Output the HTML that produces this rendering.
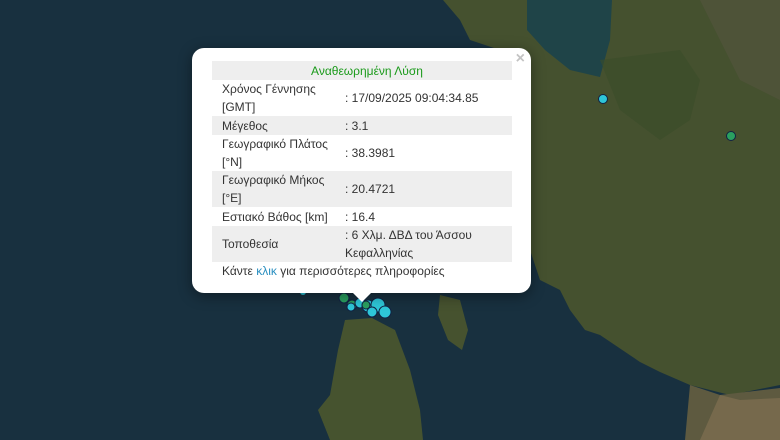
<!DOCTYPE html>
<html><head><meta charset="utf-8"><style>
body{margin:0;width:780px;height:440px;overflow:hidden;background:#16303f;font-family:"Liberation Sans","DejaVu Sans",sans-serif}
svg{position:absolute;left:0;top:0}
.pop{position:absolute;left:192px;top:48px;width:339px;height:245px;background:#fff;border-radius:12px;box-shadow:0 3px 14px rgba(0,0,0,.4)}
.tip{position:absolute;left:352px;top:292px;width:0;height:0;border-left:10px solid transparent;border-right:10px solid transparent;border-top:10px solid #fff}
.x{position:absolute;right:6px;top:2px;color:#c3c3c3;font-size:16px;font-weight:bold}
table{position:absolute;left:20px;top:13px;width:300px;border-collapse:collapse;font-size:12px;color:#333}
td{padding:0 0 0 10px;line-height:18px;vertical-align:middle}
tr.g td{background:#eee}
td.v{padding-left:4px}
.h td{text-align:center;color:#1a9a1a;height:19px}
</style></head><body>
<svg width="780" height="440" viewBox="0 0 780 440">
<rect width="780" height="440" fill="#18303f"/>
<path d="M443,0 L780,0 L780,385 L730,395 L690,385 L660,372 L640,362 L600,335 L585,330 L570,310 L560,290 L540,280 L530,250 L530,60 L470,40 L460,20 Z" fill="#45512f"/>
<path d="M527,0 L612,0 L610,40 L600,77 L570,70 L545,50 L527,30 Z" fill="#1f4448"/>
<path d="M690,385 L720,395 L780,388 L780,440 L685,440 Z" fill="#5e5a40"/>
<path d="M720,395 L740,400 L780,398 L780,440 L700,440 Z" fill="#76694c"/>
<path d="M345,320 L372,318 L395,330 L410,370 L420,410 L423,440 L330,440 L318,410 L330,395 L338,350 Z" fill="#46532f"/>
<path d="M440,295 L460,300 L468,330 L462,350 L448,340 L438,315 Z" fill="#46522f"/>
<path d="M600,60 L680,50 L700,80 L690,120 L660,140 L620,110 Z" fill="#3a4d2a" opacity=".6"/>
<path d="M700,0 L780,0 L780,100 L740,80 L720,40 Z" fill="#555540" opacity=".6"/>
<circle cx="603" cy="99" r="4.5" fill="#2ec6d8" stroke="#124" stroke-width="1"/>
<circle cx="731" cy="136" r="4.5" fill="#2aa060" stroke="#124" stroke-width="1"/>
<g stroke="#124" stroke-width="1">
<circle cx="344" cy="298" r="5" fill="#2aa060"/>
<circle cx="352" cy="305" r="5" fill="#2aa060"/>
<circle cx="360" cy="303" r="5" fill="#2ec6d8"/>
<circle cx="368" cy="306" r="6" fill="#2ec6d8"/>
<circle cx="378" cy="305" r="7" fill="#2ec6d8"/>
<circle cx="385" cy="312" r="6" fill="#2ec6d8"/>
<circle cx="372" cy="312" r="5" fill="#2ec6d8"/>
<circle cx="366" cy="305" r="4" fill="#2aa060"/>
<circle cx="351" cy="307" r="4" fill="#2ec6d8"/>
</g>
<circle cx="303" cy="292" r="3" fill="#2ec6d8"/>
</svg>
<div class="pop"><span class="x">×</span>
<table>
<tr class="g h"><td colspan="2">Αναθεωρημένη Λύση</td></tr>
<tr><td style="height:36px;width:119px">Χρόνος Γέννησης<br>[GMT]</td><td class="v">: 17/09/2025 09:04:34.85</td></tr>
<tr class="g"><td style="height:19px">Μέγεθος</td><td class="v">: 3.1</td></tr>
<tr><td style="height:35px">Γεωγραφικό Πλάτος<br>[°N]</td><td class="v">: 38.3981</td></tr>
<tr class="g"><td style="height:36px">Γεωγραφικό Μήκος<br>[°E]</td><td class="v">: 20.4721</td></tr>
<tr><td style="height:19px">Εστιακό Βάθος [km]</td><td class="v">: 16.4</td></tr>
<tr class="g"><td style="height:35px">Τοποθεσία</td><td class="v">: 6 Χλμ. ΔΒΔ του Άσσου<br>Κεφαλληνίας</td></tr>
<tr><td colspan="2" style="height:18px">Κάντε <span style="color:#2a8fc0">κλικ</span> για περισσότερες πληροφορίες</td></tr>
</table></div>
<div class="tip"></div>
</body></html>
